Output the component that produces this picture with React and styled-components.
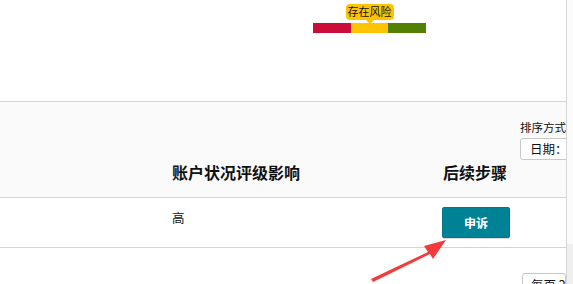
import React from 'react';
import styled, { createGlobalStyle } from 'styled-components';

const GlobalStyle = createGlobalStyle`
  html, body {
    margin: 0;
    padding: 0;
    background: #fff;
    overflow: hidden;
  }
  body {
    font-family: Arial, "Liberation Sans", "Noto Sans CJK SC", sans-serif;
    color: #0f1111;
  }
`;

const Page = styled.div`
  display: flex;
  width: 573px;
  height: 284px;
  overflow: hidden;
  position: relative;
`;

const Main = styled.div`
  width: 566px;
  flex: none;
  overflow: hidden;
`;

const ScrollStrip = styled.div`
  flex: 1;
  border-left: 1px solid #d5d5d5;
  background: linear-gradient(#fbfbfb 0, #fbfbfb 244px, #efefef 244px);
`;

const Top = styled.div`
  height: 101px;
  box-sizing: border-box;
  padding: 4px 0 0 313px;
`;

const Rating = styled.div`
  display: flex;
  flex-direction: column;
  align-items: center;
  width: 113px;
`;

const Badge = styled.div`
  position: relative;
  background: #ffc400;
  border-radius: 4px;
  padding: 0 2px;
  height: 16px;
  line-height: 16px;
  font-size: 11px;
  color: #111;
  margin-bottom: 3px;

  &::after {
    content: '';
    position: absolute;
    left: 50%;
    bottom: -4px;
    margin-left: -4px;
    border-left: 4px solid transparent;
    border-right: 4px solid transparent;
    border-top: 4px solid #ffc400;
  }
`;

const Bar = styled.div`
  display: flex;
  width: 113px;
  height: 10px;
`;

const Segment = styled.div`
  flex: 1;
  background: ${(p) => p.color};
`;

const Table = styled.div`
  display: grid;
  grid-template-columns: 172px 1fr 120px 56px;
`;

const HeadCell = styled.div`
  height: 97px;
  box-sizing: border-box;
  background: #fafafa;
  border-top: 1px solid #d5d5d5;
  border-bottom: 1px solid #d5d5d5;
  display: flex;
  align-items: flex-end;
  justify-content: ${(p) => (p.right ? 'flex-end' : 'flex-start')};
  padding: 0 ${(p) => (p.right ? '3px' : '0')} 13px 0;
  font-family: "Noto Sans CJK SC", sans-serif;
  font-size: 16px;
  font-weight: 700;
  color: #0f1111;
  white-space: nowrap;
`;

const SortCell = styled.div`
  height: 97px;
  box-sizing: border-box;
  background: #fafafa;
  border-top: 1px solid #d5d5d5;
  border-bottom: 1px solid #d5d5d5;
  padding: 17px 0 0 10px;
  overflow: hidden;
  white-space: nowrap;
`;

const SortLabel = styled.div`
  font-family: "Noto Sans CJK SC", sans-serif;
  font-size: 11.5px;
  line-height: 16px;
  color: #0f1111;
  margin-bottom: 3px;
`;

const SelectBox = styled.div`
  width: 60px;
  height: 22px;
  box-sizing: border-box;
  border: 1px solid #c8c8c8;
  border-radius: 3px;
  padding-left: 9px;
  font-family: "Noto Sans CJK SC", sans-serif;
  font-size: 12.5px;
  line-height: 20px;
  background: #fff;
`;

const BodyCell = styled.div`
  height: 50px;
  box-sizing: border-box;
  border-bottom: 1px solid #d5d5d5;
  display: flex;
  justify-content: ${(p) => (p.right ? 'flex-end' : 'flex-start')};
  align-items: flex-start;
  padding-top: ${(p) => (p.right ? '9px' : '10px')};
  font-family: "Noto Sans CJK SC", sans-serif;
  font-size: 12.5px;
  color: #0f1111;
`;

const AppealButton = styled.button`
  width: 68px;
  height: 31px;
  background: #008296;
  border: 1px solid #007686;
  border-radius: 2px;
  color: #fff;
  font-family: "Noto Sans CJK SC", sans-serif;
  font-size: 12px;
  font-weight: 700;
  padding: 0;
  box-shadow: 0 1px 1px rgba(0, 0, 0, 0.15);
`;

const Footer = styled.div`
  display: flex;
  justify-content: flex-end;
  padding-top: 25px;
`;

const PageSize = styled.div`
  width: 44px;
  height: 24px;
  box-sizing: border-box;
  border: 1px solid #c8c8c8;
  border-radius: 3px;
  padding-left: 8px;
  font-family: "Noto Sans CJK SC", sans-serif;
  font-size: 12.5px;
  line-height: 22px;
  white-space: nowrap;
  overflow: hidden;
`;

const Arrow = styled.svg`
  position: absolute;
  left: 0;
  top: 0;
  pointer-events: none;
`;

export default function App() {
  return (
    <>
      <GlobalStyle />
      <Page>
        <Main>
          <Top>
            <Rating>
              <Badge>存在风险</Badge>
              <Bar>
                <Segment color="#cc0c39" />
                <Segment color="#ffc400" />
                <Segment color="#538000" />
              </Bar>
            </Rating>
          </Top>
          <Table>
            <HeadCell />
            <HeadCell>账户状况评级影响</HeadCell>
            <HeadCell right>后续步骤</HeadCell>
            <SortCell>
              <SortLabel>排序方式</SortLabel>
              <SelectBox>日期：</SelectBox>
            </SortCell>
            <BodyCell />
            <BodyCell>高</BodyCell>
            <BodyCell right>
              <AppealButton>申诉</AppealButton>
            </BodyCell>
            <BodyCell />
          </Table>
          <Footer>
            <PageSize>每页 20</PageSize>
          </Footer>
        </Main>
        <ScrollStrip />
        <Arrow width="573" height="284" viewBox="0 0 573 284">
          <polygon points="371,279 428,252 424,246 446,240 433,259 430,254 373,282" fill="#f23b3b" />
        </Arrow>
      </Page>
    </>
  );
}
